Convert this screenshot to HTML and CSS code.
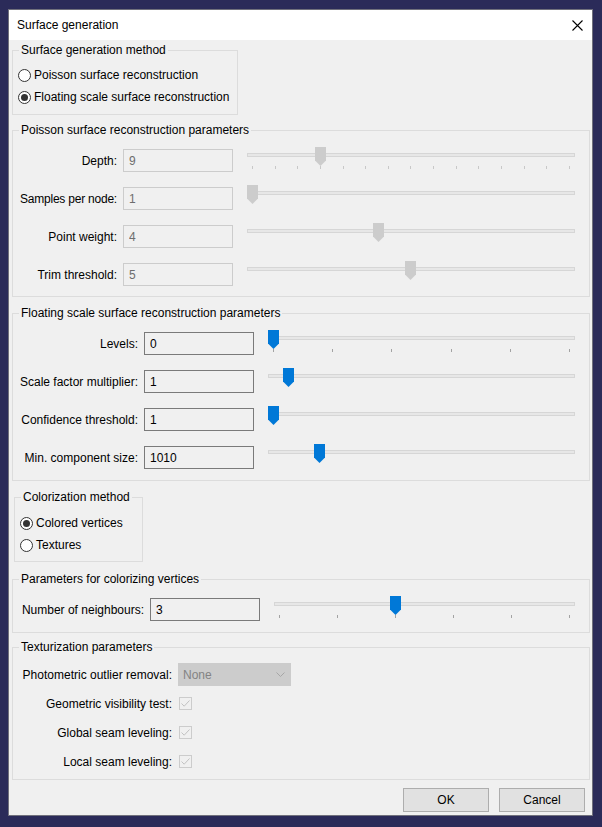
FILE: index.html
```html
<!DOCTYPE html>
<html>
<head>
<meta charset="utf-8">
<title>Surface generation</title>
<link rel="stylesheet" href="styles.css">
</head>
<body>
<div class="dialog">
  <div class="titlebar">
    <span class="title">Surface generation</span>
    <svg class="close" width="11" height="11" viewBox="0 0 11 11"><path d="M0.5 0.5L10.5 10.5M10.5 0.5L0.5 10.5" stroke="#000" stroke-width="1.1" fill="none"/></svg>
  </div>
  <div class="content">
    <fieldset class="group g-method">
      <legend>Surface generation method</legend>
      <label class="radio-row"><span class="radio"></span>Poisson surface reconstruction</label>
      <label class="radio-row"><span class="radio checked"></span>Floating scale surface reconstruction</label>
    </fieldset>

    <fieldset class="group g-poisson">
      <legend>Poisson surface reconstruction parameters</legend>
      <div class="form form-poisson">
        <span class="lbl">Depth:</span>
        <input class="field" type="text" value="9" disabled>
        <div class="slider disabled" style="--v:0.214">
          <div class="groove"></div>
          <div class="ticks light"><i></i><i></i><i></i><i></i><i></i><i></i><i></i><i></i><i></i><i></i><i></i><i></i><i></i><i></i><i></i></div>
          <svg class="thumb" viewBox="0 0 11 19"><path d="M0 0H11V13.5L5.5 19L0 13.5Z"/></svg>
        </div>

        <span class="lbl tight">Samples per node:</span>
        <input class="field" type="text" value="1" disabled>
        <div class="slider disabled" style="--v:0">
          <div class="groove"></div>
          <svg class="thumb" viewBox="0 0 11 19"><path d="M0 0H11V13.5L5.5 19L0 13.5Z"/></svg>
        </div>

        <span class="lbl">Point weight:</span>
        <input class="field" type="text" value="4" disabled>
        <div class="slider disabled" style="--v:0.397">
          <div class="groove"></div>
          <svg class="thumb" viewBox="0 0 11 19"><path d="M0 0H11V13.5L5.5 19L0 13.5Z"/></svg>
        </div>

        <span class="lbl">Trim threshold:</span>
        <input class="field" type="text" value="5" disabled>
        <div class="slider disabled" style="--v:0.498">
          <div class="groove"></div>
          <svg class="thumb" viewBox="0 0 11 19"><path d="M0 0H11V13.5L5.5 19L0 13.5Z"/></svg>
        </div>
      </div>
    </fieldset>

    <fieldset class="group g-floating">
      <legend>Floating scale surface reconstruction parameters</legend>
      <div class="form form-floating">
        <span class="lbl">Levels:</span>
        <input class="field active" type="text" value="0">
        <div class="slider" style="--v:0">
          <div class="groove"></div>
          <div class="ticks"><i></i><i></i><i></i><i></i><i></i><i></i></div>
          <svg class="thumb" viewBox="0 0 11 19"><path d="M0 0H11V13.5L5.5 19L0 13.5Z"/></svg>
        </div>

        <span class="lbl">Scale factor multiplier:</span>
        <input class="field active" type="text" value="1">
        <div class="slider" style="--v:0.052">
          <div class="groove"></div>
          <svg class="thumb" viewBox="0 0 11 19"><path d="M0 0H11V13.5L5.5 19L0 13.5Z"/></svg>
        </div>

        <span class="lbl">Confidence threshold:</span>
        <input class="field active" type="text" value="1">
        <div class="slider" style="--v:0">
          <div class="groove"></div>
          <svg class="thumb" viewBox="0 0 11 19"><path d="M0 0H11V13.5L5.5 19L0 13.5Z"/></svg>
        </div>

        <span class="lbl">Min. component size:</span>
        <input class="field active" type="text" value="1010">
        <div class="slider" style="--v:0.157">
          <div class="groove"></div>
          <svg class="thumb" viewBox="0 0 11 19"><path d="M0 0H11V13.5L5.5 19L0 13.5Z"/></svg>
        </div>
      </div>
    </fieldset>

    <fieldset class="group g-color">
      <legend>Colorization method</legend>
      <label class="radio-row"><span class="radio checked"></span>Colored vertices</label>
      <label class="radio-row"><span class="radio"></span>Textures</label>
    </fieldset>

    <fieldset class="group g-vertices">
      <legend>Parameters for colorizing vertices</legend>
      <div class="form form-vertices">
        <span class="lbl">Number of neighbours:</span>
        <input class="field active" type="text" value="3">
        <div class="slider" style="--v:0.4">
          <div class="groove"></div>
          <div class="ticks"><i></i><i></i><i></i><i></i><i></i><i></i></div>
          <svg class="thumb" viewBox="0 0 11 19"><path d="M0 0H11V13.5L5.5 19L0 13.5Z"/></svg>
        </div>
      </div>
    </fieldset>

    <fieldset class="group g-texture">
      <legend>Texturization parameters</legend>
      <div class="form form-texture">
        <span class="lbl">Photometric outlier removal:</span>
        <div class="combo">
          <span>None</span>
          <svg width="9" height="5" viewBox="0 0 9 5"><path d="M0.5 0.5L4.5 4.5L8.5 0.5" stroke="#a6a6a6" fill="none"/></svg>
        </div>

        <span class="lbl">Geometric visibility test:</span>
        <span class="check"><svg width="11" height="11" viewBox="0 0 11 11"><path d="M1.5 5.5L4.2 8.2L9.5 2.5" stroke="#c2c2c2" fill="none"/></svg></span>

        <span class="lbl">Global seam leveling:</span>
        <span class="check"><svg width="11" height="11" viewBox="0 0 11 11"><path d="M1.5 5.5L4.2 8.2L9.5 2.5" stroke="#c2c2c2" fill="none"/></svg></span>

        <span class="lbl">Local seam leveling:</span>
        <span class="check"><svg width="11" height="11" viewBox="0 0 11 11"><path d="M1.5 5.5L4.2 8.2L9.5 2.5" stroke="#c2c2c2" fill="none"/></svg></span>
      </div>
    </fieldset>

    <div class="buttons">
      <button class="btn" type="button">OK</button>
      <button class="btn" type="button">Cancel</button>
    </div>
  </div>
</div>
</body>
</html>
```

FILE: styles.css
```css
* {
  box-sizing: border-box;
}

html, body {
  margin: 0;
  height: 100%;
}

body {
  background: #2b2b59;
  font-family: "Liberation Sans", Arial, sans-serif;
  font-size: 12px;
  color: #000;
  overflow: hidden;
}

.dialog {
  margin: 9px 0 0 8px;
  width: 585px;
  height: 807px;
  border: 1px solid #70707c;
  background: #f0f0f0;
  display: flex;
  flex-direction: column;
}

.titlebar {
  height: 30px;
  flex: none;
  background: #fff;
  display: flex;
  align-items: center;
  padding: 0 9px 0 8px;
}

.close {
  margin-left: auto;
}

.content {
  flex: 1;
  padding: 3px 2px 0 3px;
  display: flex;
  flex-direction: column;
}

.group {
  margin: 0;
  min-width: 0;
  border: 1px solid #dcdcdc;
  padding: 11px 14px 10px 7px;
}

.group legend {
  padding: 0 2px;
  margin-left: -1px;
  height: 15px;
  line-height: 15px;
}

.g-method {
  width: 226px;
  padding: 6px 7px 6px 7px;
}

.g-poisson {
  margin-top: 8px;
  padding-bottom: 10px;
}

.g-floating {
  margin-top: 9px;
  padding-bottom: 11px;
}

.g-color {
  width: 129px;
  margin: 9px 0 0 2px;
  padding: 7px 7px 5px 7px;
}

.g-vertices {
  margin-top: 10px;
  padding-bottom: 11px;
}

.g-texture {
  margin-top: 7px;
  padding: 8px 14px 6px 7px;
}

/* radios */
.radio-row {
  height: 22px;
  display: flex;
  align-items: center;
  gap: 3px;
  margin-left: -2px;
}

.radio {
  flex: none;
  width: 13px;
  height: 13px;
  border: 1px solid #333;
  border-radius: 50%;
  background: #fff;
  display: flex;
  align-items: center;
  justify-content: center;
}

.radio.checked::after {
  content: "";
  width: 7px;
  height: 7px;
  border-radius: 50%;
  background: #333;
}

/* forms */
.form {
  display: grid;
  column-gap: 6px;
  row-gap: 15px;
  grid-auto-rows: 23px;
  align-items: center;
}

.form-poisson {
  grid-template-columns: 97px 110px 1fr;
}

.form-floating {
  grid-template-columns: 118px 110px 1fr;
}

.form-vertices {
  grid-template-columns: 124px 110px 1fr;
}

.form-texture {
  grid-template-columns: 152px 1fr;
  row-gap: 6px;
}

.lbl {
  display: flex;
  justify-content: flex-end;
  white-space: nowrap;
  min-width: 0;
}

.lbl.tight {
  letter-spacing: -0.22px;
}

.field {
  height: 23px;
  width: 110px;
  margin: 0;
  padding: 0 5px;
  font: inherit;
  border: 1px solid #cccccc;
  background: #f0f0f0;
  color: #6d6d6d;
  outline: none;
}

.field.active {
  border-color: #7a7a7a;
  color: #000;
}

/* sliders */
.slider {
  position: relative;
  height: 23px;
  margin-left: 8px;
}

.groove {
  margin-top: 4px;
  height: 4px;
  border: 1px solid #d6d6d6;
  background: #e7e7e7;
}

.ticks {
  margin: 9px 5px 0 5px;
  height: 3px;
  display: flex;
  justify-content: space-between;
}

.ticks i {
  width: 1px;
  height: 3px;
  background: #a3a3a3;
}

.ticks.light i {
  background: #c8c8c8;
}

.thumb {
  position: absolute;
  top: -2px;
  left: calc((100% - 11px) * var(--v));
  width: 11px;
  height: 19px;
  fill: #0078d7;
}

.slider.disabled .thumb {
  fill: #cccccc;
}

/* texture */
.combo {
  width: 113px;
  height: 23px;
  background: #cccccc;
  border: 1px solid #cccccc;
  color: #838383;
  display: flex;
  align-items: center;
  justify-content: space-between;
  padding: 0 5px 0 4px;
}

.check {
  width: 13px;
  height: 13px;
  margin-left: 1px;
  border: 1px solid #cccccc;
  background: #f0f0f0;
  display: flex;
  align-items: center;
  justify-content: center;
}

.buttons {
  display: flex;
  justify-content: flex-end;
  gap: 10px;
  margin-top: 8px;
  padding-right: 5px;
}

.btn {
  width: 86px;
  height: 24px;
  margin: 0;
  padding: 0;
  border: 1px solid #adadad;
  background: #e1e1e1;
  font: inherit;
  color: #000;
}
```
